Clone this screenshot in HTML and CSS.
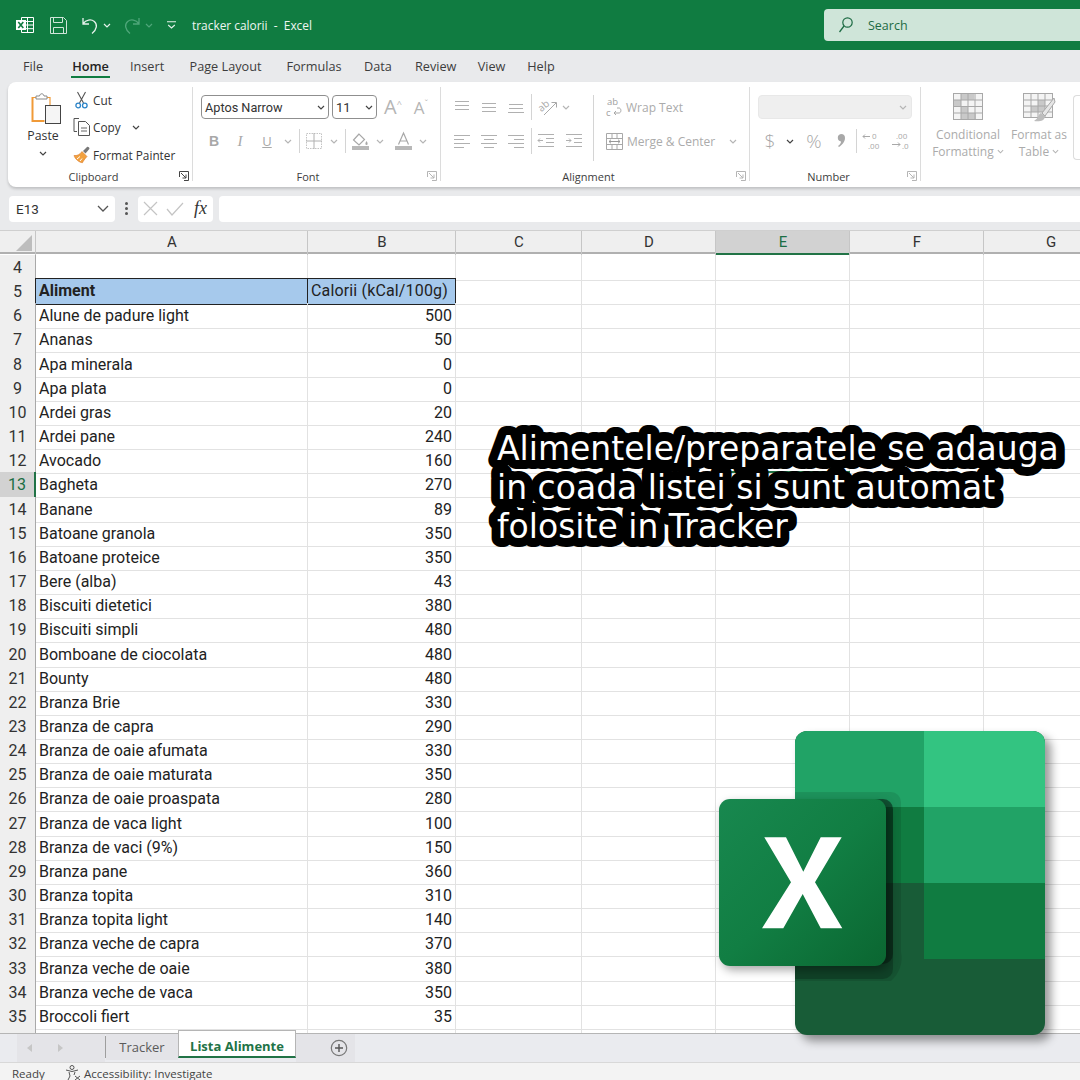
FILE: index.html
```html
<!DOCTYPE html>
<html lang="ro">
<head>
<meta charset="utf-8">
<title>tracker calorii - Excel</title>
<link rel="stylesheet" href="styles.css">
</head>
<body>
<svg class="defs" width="0" height="0" aria-hidden="true">
  <symbol id="chev" viewBox="0 0 8 5"><path d="M1 1l3 3 3-3" fill="none" stroke="currentColor" stroke-width="1.2"/></symbol>
  <symbol id="launch" viewBox="0 0 10 10"><path d="M.5 6V.5H9.5V9.5H5M2 2l5 5M7 3.5V7H3.5" fill="none" stroke="currentColor"/></symbol>
</svg>
<div class="app">
  <header class="titlebar">
    <svg class="t-excel" width="18" height="16" viewBox="0 0 18 16"><path d="M5.5.5h12v15h-12z" fill="none" stroke="#fff"/><path d="M11.5.5v15M5.5 4.5h12M5.5 8h12M5.5 11.7h12" stroke="#fff"/><rect x="0" y="3" width="10" height="10" fill="#fff"/><path d="M2.3 5l5 6M7.3 5l-5 6" stroke="#107c41" stroke-width="1.6"/></svg>
    <svg class="t-save" width="17" height="17" viewBox="0 0 17 17"><path d="M.5.5h13l3 3v13H.5z" fill="none" stroke="#cfe5d9"/><path d="M3.5.5v5h9v-5M3.5 16.5v-6h10v6" fill="none" stroke="#cfe5d9"/></svg>
    <svg class="t-undo" width="16" height="17" viewBox="0 0 16 17"><path d="M1 1v6h6M1.2 6.5C4 2.800 9 1.800 12.300 4.500c3.200 2.800 3 7.500-2.300 12" fill="none" stroke="#e6f2ec" stroke-width="1.3"/></svg>
    <svg class="t-chev" width="8" height="5"><use href="#chev"/></svg>
    <svg class="t-redo" width="16" height="17" viewBox="0 0 16 17"><path d="M15 1v6H9M14.800 6.500C12 2.800 7 1.800 3.700 4.500.5 7.300.7 12 6 16.500" fill="none" stroke="#4fa67a" stroke-width="1.3"/></svg>
    <svg class="t-chev dim" width="8" height="5"><use href="#chev"/></svg>
    <svg class="t-custom" width="9" height="8" viewBox="0 0 9 8"><path d="M0 .7h9M1.200 4l3.300 3L7.800 4" fill="none" stroke="#e6f2ec" stroke-width="1.100"/></svg>
    <span class="t-title">tracker calorii&nbsp; - &nbsp;Excel</span>
    <div class="searchbox">
      <svg width="14" height="16" viewBox="0 0 14 16"><circle cx="8.500" cy="5.500" r="4.700" fill="none" stroke="#1d6b44" stroke-width="1.200"/><path d="M5 9l-4.500 6" stroke="#1d6b44" stroke-width="1.300"/></svg>
      <span>Search</span>
    </div>
  </header>

  <nav class="tabs">
    <span class="tab t1">File</span>
    <span class="tab t2 active">Home</span>
    <span class="tab t3">Insert</span>
    <span class="tab t4">Page Layout</span>
    <span class="tab t5">Formulas</span>
    <span class="tab t6">Data</span>
    <span class="tab t7">Review</span>
    <span class="tab t8">View</span>
    <span class="tab t9">Help</span>
  </nav>

  <section class="ribbon">
    <div class="group g-clip">
      <div class="g-body clip-body">
        <div class="paste">
          <svg class="paste-ic" width="30" height="32" viewBox="0 0 30 32">
            <path d="M1 5.500h4M15 5.500h4V13" fill="none" stroke="#f09a38" stroke-width="1.200"/>
            <path d="M1.500 5v24h12" fill="none" stroke="#f09a38" stroke-width="2"/>
            <path d="M5 7V4h3.500c.5-3 4-3 4.500 0h3v3z" fill="#fff" stroke="#8a8a8a"/>
            <rect x="14.500" y="13.500" width="15" height="18" fill="#f5f5f5" stroke="#444"/>
          </svg>
          <span class="paste-l">Paste</span>
          <svg class="ic-chev dark" width="8" height="5"><use href="#chev"/></svg>
        </div>
        <div class="clip-list">
          <div class="clip-item">
            <svg width="16" height="18" viewBox="0 0 16 18"><path d="M3.500 1l6 11M11.500 1l-6 11" stroke="#555" stroke-width="1.100" fill="none"/><circle cx="4.200" cy="14.500" r="2.300" fill="none" stroke="#2f86c9" stroke-width="1.300"/><circle cx="10.800" cy="14.500" r="2.300" fill="none" stroke="#2f86c9" stroke-width="1.300"/></svg>
            <span>Cut</span>
          </div>
          <div class="clip-item">
            <svg width="18" height="18" viewBox="0 0 18 18"><path d="M6 .5H1v13h3" fill="none" stroke="#555"/><path d="M5.500 3.500h7l4 4v10h-11z" fill="#fff" stroke="#555"/><path d="M8 10h6M8 13h6" stroke="#666"/></svg>
            <span>Copy</span>
            <svg class="copy-chev dark" width="8" height="5"><use href="#chev"/></svg>
          </div>
          <div class="clip-item">
            <svg width="18" height="17" viewBox="0 0 18 17"><path d="M1 9.500c3 .5 6-1 8-4l5 5c-2 2-4 5-4.500 6.200C6 16.500 2 13 1 9.500z" fill="#f2a13f" stroke="#d9792a" stroke-width=".6"/><path d="M4 13l3-2.500M7 15l2-2.500" stroke="#fff"/><path d="M10 5l4-4c1-.8 3 1 2.300 2l-3.800 4.500z" fill="#777"/></svg>
            <span>Format Painter</span>
          </div>
        </div>
      </div>
      <div class="glabel"><span></span><span>Clipboard</span><span></span><svg class="launch dark" width="10" height="10"><use href="#launch"/></svg></div>
    </div>

    <div class="group g-font">
      <div class="g-body">
        <div class="font-row1">
          <div class="select s-font"><span>Aptos Narrow</span><svg class="dark" width="8" height="5"><use href="#chev"/></svg></div>
          <div class="select s-size"><span>11</span><svg class="dark" width="8" height="5"><use href="#chev"/></svg></div>
          <span class="grow big">A<sup>^</sup></span>
          <span class="grow small">A<sup>ˇ</sup></span>
        </div>
        <div class="font-row2">
          <b class="fmt">B</b>
          <i class="fmt ital">I</i>
          <u class="fmt und">U</u>
          <svg class="off" width="8" height="5"><use href="#chev"/></svg>
          <span class="vsep"></span>
          <svg width="16" height="16" viewBox="0 0 16 16"><path d="M.5.500h15v15H.5z" fill="none" stroke="#c4c4c4" stroke-dasharray="1.500 1"/><path d="M8 0v16M0 8h16" stroke="#b0b0b0"/></svg>
          <svg class="off" width="8" height="5"><use href="#chev"/></svg>
          <span class="vsep"></span>
          <svg width="17" height="17" viewBox="0 0 17 17"><path d="M7 1L1.500 7 7 12l5.500-5.500z" fill="none" stroke="#a8a8a8" stroke-width="1.200"/><path d="M14.500 8c1.500 2 1.500 4 0 4s-1.500-2 0-4z" fill="#a8a8a8"/><rect y="13" width="17" height="4" fill="#b8b8b8"/></svg>
          <svg class="off" width="8" height="5"><use href="#chev"/></svg>
          <svg width="17" height="17" viewBox="0 0 17 17"><path d="M3.500 11.500L8.500 0l5 11.500M5 8h7" fill="none" stroke="#a8a8a8" stroke-width="1.200"/><rect y="13" width="17" height="4" fill="#b8b8b8"/></svg>
          <svg class="off" width="8" height="5"><use href="#chev"/></svg>
        </div>
      </div>
      <div class="glabel"><span></span><span>Font</span><span></span><svg class="launch off" width="10" height="10"><use href="#launch"/></svg></div>
    </div>

    <div class="group g-align">
      <div class="g-body align-body">
        <div class="align-grid">
          <svg width="18" height="12" viewBox="0 0 18 12"><path d="M2 .5h14M2 4.500h14M2 8.500h14" stroke="#b0b0b0"/></svg>
          <svg width="18" height="12" viewBox="0 0 18 12"><path d="M2 2.500h14M2 6.500h14M2 10.500h14" stroke="#b0b0b0"/></svg>
          <svg width="18" height="12" viewBox="0 0 18 12"><path d="M2 3.500h14M2 7.500h14M1 11.500h16" stroke="#b0b0b0"/></svg>
          <span class="vsep tall"></span>
          <div class="orient">
            <svg width="20" height="18" viewBox="0 0 20 18"><text class="orient-t" x="0" y="11" transform="rotate(-40 6 8)">ab</text><path d="M6 17L18 5M13.500 4.500H18.500V9.500" fill="none" stroke="#a8a8a8"/></svg>
            <svg class="off" width="8" height="5"><use href="#chev"/></svg>
          </div>
          <svg width="18" height="14" viewBox="0 0 18 14"><path d="M1 1.500h16M1 5.500h10M1 9.500h16M1 13.500h10" stroke="#b0b0b0"/></svg>
          <svg width="18" height="14" viewBox="0 0 18 14"><path d="M1 1.500h16M4 5.500h10M1 9.500h16M4 13.500h10" stroke="#b0b0b0"/></svg>
          <svg width="18" height="14" viewBox="0 0 18 14"><path d="M1 1.500h16M7 5.500h10M1 9.500h16M7 13.500h10" stroke="#b0b0b0"/></svg>
          <span class="vsep tall"></span>
          <svg width="18" height="14" viewBox="0 0 18 14"><path d="M1 .5h16M9 4.500h8M9 8.500h8M1 12.500h16M6 6.500H1M3 4.500l-2 2 2 2" fill="none" stroke="#b0b0b0"/></svg>
          <svg width="18" height="14" viewBox="0 0 18 14"><path d="M1 .5h16M9 4.500h8M9 8.500h8M1 12.500h16M1 6.500h5M4 4.500l2 2-2 2" fill="none" stroke="#b0b0b0"/></svg>
        </div>
        <span class="vsep full"></span>
        <div class="wrap-col">
          <div class="wrap-item"><svg width="16" height="20" viewBox="0 0 16 20"><text class="wrap-t" x="1" y="8">ab</text><text class="wrap-t" x="0" y="19">c</text><path d="M8 16h5c2.500 0 2.500-5 0-5h-2M10 14l-2 2 2 2" fill="none" stroke="#a8a8a8"/></svg><span>Wrap Text</span></div>
          <div class="wrap-item"><svg width="17" height="17" viewBox="0 0 17 17"><path d="M.5.500h16v16H.5zM.5 5.500h16M.5 11.500h16M6 .5v5M11 .5v5M6 11.500v5M11 11.500v5" fill="none" stroke="#a8a8a8"/><path d="M3 8.500h11M5 6.700L3 8.500l2 1.800M12 6.700l2 1.800-2 1.800" fill="none" stroke="#999"/></svg><span>Merge &amp; Center</span><svg class="off merge-chev" width="8" height="5"><use href="#chev"/></svg></div>
        </div>
      </div>
      <div class="glabel"><span></span><span>Alignment</span><span></span><svg class="launch off" width="10" height="10"><use href="#launch"/></svg></div>
    </div>

    <div class="group g-num">
      <div class="g-body">
        <div class="select s-num"><svg class="off" width="8" height="5"><use href="#chev"/></svg></div>
        <div class="num-row">
          <span class="num-s">$</span>
          <svg class="dark" width="8" height="5"><use href="#chev"/></svg>
          <span class="num-s pct">%</span>
          <svg width="10" height="14" viewBox="0 0 10 14"><path d="M5 0a4 4 0 0 1 4 4c0 4-3 7-6 9l-1-1c2-1.500 3-3 3-4.500A3.800 3.800 0 0 1 5 0z" fill="#a8a8a8"/></svg>
          <span class="vsep"></span>
          <svg width="20" height="18" viewBox="0 0 20 18"><text class="dec-t" x="10" y="7">0</text><text class="dec-t" x="6" y="17">.00</text><path d="M8 4.500H1M3 2.500L1 4.500l2 2" fill="none" stroke="#a8a8a8"/></svg>
          <svg width="20" height="18" viewBox="0 0 20 18"><text class="dec-t" x="6" y="7">.00</text><text class="dec-t" x="12" y="17">.0</text><path d="M2 12.500h8M8 10.500l2 2-2 2" fill="none" stroke="#a8a8a8"/></svg>
        </div>
      </div>
      <div class="glabel"><span></span><span>Number</span><span></span><svg class="launch off" width="10" height="10"><use href="#launch"/></svg></div>
    </div>

    <div class="group g-styles">
      <div class="style-item s-cf">
        <svg width="30" height="28" viewBox="0 0 30 28"><rect x=".5" y=".5" width="29" height="26" fill="#f4f4f4" stroke="#a8a8a8"/><path d="M8 1h13v6H8zM1 7h7v6H1zM15 13H8v7h7zM8 20h15v6H8z" fill="#c9c9c9"/><path d="M0 7h30M0 13.500h30M0 20h30M8 0v27M15 0v27M22 0v27" stroke="#a8a8a8" fill="none"/></svg>
        <span>Conditional<br>Formatting <svg class="off" width="7" height="5"><use href="#chev"/></svg></span>
      </div>
      <div class="style-item s-ft">
        <svg width="32" height="30" viewBox="0 0 32 30"><rect x=".5" y=".5" width="29" height="24" fill="#f4f4f4" stroke="#a8a8a8"/><path d="M15 7h7v6h-7zM8 13h14v6H8z" fill="#c9c9c9"/><path d="M0 7h30M0 13h30M0 19h30M8 0v25M15 0v25M22 0v25" stroke="#a8a8a8"/><path d="M31 5L19 20l3 3L32 9z" fill="#e6e6e6" stroke="#a8a8a8"/><path d="M18 20c-3 1-2 5-7 8 5 1 11 0 11-5z" fill="#bdbdbd"/></svg>
        <span>Format as<br>Table <svg class="off" width="7" height="5"><use href="#chev"/></svg></span>
      </div>
      <div class="next-box"></div>
    </div>
  </section>

  <section class="fbar">
    <div class="namebox"><span>E13</span><svg class="nb-chev" width="12" height="7" viewBox="0 0 12 7"><path d="M1 1l5 5 5-5" fill="none" stroke="#555" stroke-width="1.300"/></svg></div>
    <div class="fdots"><i></i><i></i><i></i></div>
    <div class="fbtns">
      <svg width="15" height="15" viewBox="0 0 15 15"><path d="M1 1l13 13M14 1L1 14" stroke="#c4c4c4" stroke-width="1.200"/></svg>
      <svg width="18" height="14" viewBox="0 0 18 14"><path d="M1 7l5 6L17 1" fill="none" stroke="#c4c4c4" stroke-width="1.200"/></svg>
      <span class="fx">fx</span>
    </div>
    <div class="finput"></div>
  </section>

  <main class="sheet">
    <div class="colhead">
      <div class="corner"><svg width="16" height="16" viewBox="0 0 16 16"><path d="M16 0v16H0z" fill="#bdbdbd"/></svg></div>
      <div class="ch">A</div><div class="ch">B</div><div class="ch">C</div><div class="ch">D</div><div class="ch sel">E</div><div class="ch">F</div><div class="ch">G</div>
    </div>
    <div class="rows">
      <div class="row"><div class="rh">4</div><div class="ca"></div><div class="cb"></div><div class="rest"></div></div>
      <div class="row"><div class="rh">5</div><div class="ca hd"><b>Aliment</b></div><div class="cb hd">Calorii (kCal/100g)</div><div class="rest"></div></div>
      <div class="row"><div class="rh">6</div><div class="ca">Alune de padure light</div><div class="cb">500</div><div class="rest"></div></div>
      <div class="row"><div class="rh">7</div><div class="ca">Ananas</div><div class="cb">50</div><div class="rest"></div></div>
      <div class="row"><div class="rh">8</div><div class="ca">Apa minerala</div><div class="cb">0</div><div class="rest"></div></div>
      <div class="row"><div class="rh">9</div><div class="ca">Apa plata</div><div class="cb">0</div><div class="rest"></div></div>
      <div class="row"><div class="rh">10</div><div class="ca">Ardei gras</div><div class="cb">20</div><div class="rest"></div></div>
      <div class="row"><div class="rh">11</div><div class="ca">Ardei pane</div><div class="cb">240</div><div class="rest"></div></div>
      <div class="row"><div class="rh">12</div><div class="ca">Avocado</div><div class="cb">160</div><div class="rest"></div></div>
      <div class="row"><div class="rh sel">13</div><div class="ca">Bagheta</div><div class="cb">270</div><div class="rest"><div class="active-cell"></div></div></div>
      <div class="row"><div class="rh">14</div><div class="ca">Banane</div><div class="cb">89</div><div class="rest"></div></div>
      <div class="row"><div class="rh">15</div><div class="ca">Batoane granola</div><div class="cb">350</div><div class="rest"></div></div>
      <div class="row"><div class="rh">16</div><div class="ca">Batoane proteice</div><div class="cb">350</div><div class="rest"></div></div>
      <div class="row"><div class="rh">17</div><div class="ca">Bere (alba)</div><div class="cb">43</div><div class="rest"></div></div>
      <div class="row"><div class="rh">18</div><div class="ca">Biscuiti dietetici</div><div class="cb">380</div><div class="rest"></div></div>
      <div class="row"><div class="rh">19</div><div class="ca">Biscuiti simpli</div><div class="cb">480</div><div class="rest"></div></div>
      <div class="row"><div class="rh">20</div><div class="ca">Bomboane de ciocolata</div><div class="cb">480</div><div class="rest"></div></div>
      <div class="row"><div class="rh">21</div><div class="ca">Bounty</div><div class="cb">480</div><div class="rest"></div></div>
      <div class="row"><div class="rh">22</div><div class="ca">Branza Brie</div><div class="cb">330</div><div class="rest"></div></div>
      <div class="row"><div class="rh">23</div><div class="ca">Branza de capra</div><div class="cb">290</div><div class="rest"></div></div>
      <div class="row"><div class="rh">24</div><div class="ca">Branza de oaie afumata</div><div class="cb">330</div><div class="rest"></div></div>
      <div class="row"><div class="rh">25</div><div class="ca">Branza de oaie maturata</div><div class="cb">350</div><div class="rest"></div></div>
      <div class="row"><div class="rh">26</div><div class="ca">Branza de oaie proaspata</div><div class="cb">280</div><div class="rest"></div></div>
      <div class="row"><div class="rh">27</div><div class="ca">Branza de vaca light</div><div class="cb">100</div><div class="rest"></div></div>
      <div class="row"><div class="rh">28</div><div class="ca">Branza de vaci (9%)</div><div class="cb">150</div><div class="rest"></div></div>
      <div class="row"><div class="rh">29</div><div class="ca">Branza pane</div><div class="cb">360</div><div class="rest"></div></div>
      <div class="row"><div class="rh">30</div><div class="ca">Branza topita</div><div class="cb">310</div><div class="rest"></div></div>
      <div class="row"><div class="rh">31</div><div class="ca">Branza topita light</div><div class="cb">140</div><div class="rest"></div></div>
      <div class="row"><div class="rh">32</div><div class="ca">Branza veche de capra</div><div class="cb">370</div><div class="rest"></div></div>
      <div class="row"><div class="rh">33</div><div class="ca">Branza veche de oaie</div><div class="cb">380</div><div class="rest"></div></div>
      <div class="row"><div class="rh">34</div><div class="ca">Branza veche de vaca</div><div class="cb">350</div><div class="rest"></div></div>
      <div class="row"><div class="rh">35</div><div class="ca">Broccoli fiert</div><div class="cb">35</div><div class="rest"></div></div>
      <div class="row"><div class="rh"></div><div class="ca"></div><div class="cb"></div><div class="rest"></div></div>
    </div>
  </main>

  <div class="sheettabs">
    <div class="st-nav">
      <svg width="6" height="8" viewBox="0 0 6 8"><path d="M5 0v8L0 4z" fill="#c6c6c6"/></svg>
      <svg width="6" height="8" viewBox="0 0 6 8"><path d="M1 0v8l5-4z" fill="#c6c6c6"/></svg>
    </div>
    <span class="st-sep"></span>
    <span class="st-tab">Tracker</span>
    <span class="st-tab current">Lista Alimente</span>
    <div class="st-add"><svg width="18" height="18" viewBox="0 0 18 18"><circle cx="9" cy="9" r="7.700" fill="none" stroke="#777" stroke-width="1.200"/><path d="M9 5v8M5 9h8" stroke="#555" stroke-width="1.400"/></svg></div>
  </div>

  <footer class="status">
    <span class="ready">Ready</span>
    <svg width="16" height="16" viewBox="0 0 16 16"><circle cx="7" cy="2.500" r="2" fill="none" stroke="#555"/><path d="M1 5l6 1.500L13 5M4 7l1 4-2 4M10 7l-1 3M10 11l5 4M15 11l-5 4" fill="none" stroke="#555"/></svg>
    <span>Accessibility: Investigate</span>
  </footer>
</div>

<svg class="note" width="600" height="140" viewBox="0 0 600 140">
  <text x="17" y="118">folosite in Tracker</text>
  <text x="17" y="79">in coada listei si sunt automat</text>
  <text x="17" y="40">Alimentele/preparatele se adauga</text>
</svg>

<svg class="logo" width="370" height="330" viewBox="0 0 370 330">
  <g class="logo-main">
    <rect x="95" y="11" width="250" height="304" rx="12" fill="#185c37"/>
    <path d="M107 11h117v76H95V23a12 12 0 0 1 12-12z" fill="#21a366"/>
    <path d="M224 11h109a12 12 0 0 1 12 12v64H224z" fill="#33c481"/>
    <rect x="95" y="87" width="129" height="76" fill="#107c41"/>
    <rect x="224" y="87" width="121" height="76" fill="#21a366"/>
    <rect x="224" y="163" width="121" height="76" fill="#107c41"/>
  </g>
  <path d="M95 72h96a10 10 0 0 1 10 10v150a30 30 0 0 1-10 29H95z" fill="#000" opacity=".1"/>
  <path d="M95 79h88a10 10 0 0 1 10 10v160a10 10 0 0 1-10 10H95z" fill="#000" opacity=".2"/>
  <path d="M95 79h88a10 10 0 0 1 10 10v145a10 10 0 0 1-10 10H95z" fill="#000" opacity=".3"/>
  <rect class="logo-sq" x="19" y="79" width="167" height="167" rx="11" fill="url(#lg)"/>
  <defs><linearGradient id="lg" x1="0" y1="0" x2="1" y2="1"><stop offset="0" stop-color="#18884f"/><stop offset=".5" stop-color="#117e43"/><stop offset="1" stop-color="#0b6631"/></linearGradient></defs>
  <path d="M64.300 117.300H86L103.300 151.700 120.700 117.300H141.700L115 162.300 142.300 208.300H120.700L102.700 174 83.300 208.300H62L91 162.300z" fill="#fff"/>
</svg>
</body>
</html>
```
FILE: styles.css
```css
* { box-sizing: border-box; }
html, body { margin: 0; padding: 0; width: 1080px; height: 1080px; overflow: hidden; background: #fff; }
body { position: relative; font-family: "Open Sans", "Noto Sans", sans-serif; color: #333; }
.defs { position: absolute; }
svg { display: block; flex: none; overflow: visible; }
.off { color: #b5b5b5; }
.dark { color: #444; }

.app { display: flex; flex-direction: column; width: 1080px; height: 1080px; background: #e9eaec; overflow: hidden; }

/* title bar */
.titlebar { height: 50px; flex: none; background: #107c41; display: flex; align-items: center; padding-left: 16px; color: #e6f2ec; }
.t-excel { margin-right: 16px; }
.t-save { margin-right: 15px; }
.t-chev { margin: 0 0 0 5px; color: #e6f2ec; }
.t-redo { margin-left: 13px; }
.t-chev.dim { color: #4fa67a; }
.t-custom { margin-left: 14px; }
.t-title { flex: none; margin-left: 16px; font-size: 11.900px; color: #eef6f1; white-space: nowrap; width: 632px; }
.searchbox { width: 300px; height: 32px; flex: none; background: #cfe5d9; border-radius: 4px; display: flex; align-items: center; padding-left: 15px; gap: 15px; color: #1d6b44; font-size: 12.500px; }

/* tabs */
.tabs { height: 32px; flex: none; display: flex; align-items: center; font-size: 12.700px; color: #3d3d3d; }
.tab { flex: none; text-align: center; white-space: nowrap; }
.t1 { margin-left: 23px; width: 20px; }
.t2 { margin-left: 28px; width: 39px; }
.t3 { margin-left: 20px; width: 34px; }
.t4 { margin-left: 24px; width: 75px; }
.t5 { margin-left: 23px; width: 56px; }
.t6 { margin-left: 22px; width: 28px; }
.t7 { margin-left: 23px; width: 41px; }
.t8 { margin-left: 21px; width: 29px; }
.t9 { margin-left: 21px; width: 28px; }
.tab.active { font-weight: 600; color: #222; height: 100%; line-height: 32px; box-shadow: inset 0 -4px 0 #e9eaec, inset 0 -6px 0 #107c41; }

/* ribbon */
.ribbon { height: 105px; flex: none; margin-left: 8px; width: 1100px; background: #fff; border-radius: 8px; display: flex; box-shadow: 0 2px 3px rgba(0,0,0,.18); font-size: 11.500px; overflow: hidden; }
.group { flex: none; display: flex; flex-direction: column; position: relative; padding-top: 13px; }
.group::after { content: ""; position: absolute; right: 0; top: 5px; bottom: 6px; width: 1px; background: #dcdcdc; }
.g-clip { width: 185px; padding-top: 4px; }
.g-font { width: 248px; padding-left: 8px; }
.g-align { width: 309px; padding-left: 7px; padding-top: 8px; }
.g-num { width: 171px; padding-left: 8px; }
.g-styles { width: 180px; padding-top: 0; flex-direction: row; }
.g-styles::after { display: none; }
.g-body { flex: 1; min-height: 0; }
.glabel { height: 22px; flex: none; display: grid; grid-template-columns: 1fr auto 1fr 14px; align-items: center; color: #3d3d3d; font-size: 11px; }
.g-font .glabel { margin-left: -12px; }
.g-align .glabel { margin-left: -7px; }
.g-num .glabel { margin-left: -8px; }
.launch { justify-self: start; }

.clip-body { display: flex; }
.paste { width: 40px; margin-left: 15px; display: flex; flex-direction: column; align-items: center; padding-top: 6px; }
.paste-ic { margin-left: 5px; }
.paste-l { margin-top: 4px; font-size: 12.300px; line-height: 16px; }
.ic-chev { margin-top: 7px; }
.clip-list { margin-left: 9px; display: flex; flex-direction: column; }
.clip-item { height: 27.500px; flex: none; display: flex; align-items: center; white-space: nowrap; }
.clip-item > svg:first-child { width: 20px; margin-right: 1px; }
.clip-item > span { font-size: 11.800px; }
.copy-chev { margin-left: 11px; }

.select { border: 1px solid #8f8f8f; border-radius: 4px; height: 24px; display: flex; align-items: center; justify-content: space-between; padding: 0 3px; background: #fff; font-size: 12px; color: #333; }
.s-font { width: 128px; font-family: "Roboto", sans-serif; font-size: 12.700px; }
.s-size { width: 45px; margin-left: 3px; font-family: "Roboto", sans-serif; font-size: 13px; }
.font-row1 { display: flex; align-items: center; height: 24px; }
.grow { color: #b5b5b5; font-size: 20px; line-height: 1; width: 28px; text-align: center; }
.grow sup { font-size: 9px; vertical-align: 7px; line-height: 0; }
.grow.big { margin-left: 2px; }
.grow.small { font-size: 17px; }
.font-row2 { display: grid; grid-template-columns: 26px 26px 28px 14px 8px 22px 18px 4px 26px 14px 32px 8px; justify-items: center; align-items: center; height: 24px; margin-top: 10px; color: #aaa; font-family: "Liberation Sans", sans-serif; font-size: 14px; }
.fmt { color: #a8a8a8; }
.ital { font-family: "Liberation Serif", serif; font-size: 15px; }
.und { font-weight: 400; font-family: "Open Sans", sans-serif; font-size: 13px; }
.vsep { display: block; width: 1px; height: 24px; background: #d4d4d4; }
.vsep.tall { height: 26px; }
.vsep.full { height: 66px; margin: 5px 0 0 5px; }

.align-body { display: flex; }
.align-grid { width: 140px; flex: none; display: grid; grid-template-columns: 27px 27px 28px 2px 28px 28px; grid-auto-rows: 34px; justify-items: center; align-items: center; }
.orient { grid-column: 5 / span 2; justify-self: start; display: flex; align-items: center; gap: 4px; margin-left: 6px; }
.orient-t { font-size: 10px; fill: #a8a8a8; }
.wrap-col { margin-left: 12px; display: flex; flex-direction: column; color: #ababab; font-size: 12px; }
.wrap-item { height: 34px; display: flex; align-items: center; gap: 4px; white-space: nowrap; }
.wrap-t { font-size: 9.500px; fill: #a0a0a0; }
.merge-chev { margin-left: 10px; }

.s-num { width: 154px; background: #efefef; border: 1px solid #e8e8e8; justify-content: flex-end; padding-right: 4px; }
.num-row { display: grid; grid-template-columns: 24px 16px 32px 22px 8px 24px 32px; justify-items: center; align-items: center; height: 24px; margin-top: 10px; color: #a8a8a8; }
.num-s { font-size: 19px; line-height: 24px; font-weight: 300; }
.pct { font-size: 19px; }
.dec-t { font-size: 8px; fill: #a8a8a8; font-family: "Open Sans", sans-serif; }

.style-item { flex: none; display: flex; flex-direction: column; align-items: center; text-align: center; color: #ababab; font-size: 12px; line-height: 17px; white-space: nowrap; }
.style-item span svg { display: inline-block; vertical-align: 2px; }
.s-cf { width: 80px; margin-left: 7px; padding-top: 11px; }
.s-cf > span { margin-top: 5px; }
.s-ft { width: 62px; padding-top: 11px; }
.s-ft > span { margin-top: 3px; }
.next-box { width: 40px; height: 65px; margin-top: 13px; margin-left: 3px; border: 1px solid #dcdcdc; border-right: 0; border-radius: 4px 0 0 4px; }

/* formula bar */
.fbar { height: 44px; flex: none; display: flex; align-items: center; padding: 9px 0 9px 9px; border-bottom: 1px solid #cfcfcf; }
.namebox { width: 106px; height: 26px; background: #fff; border-radius: 4px; display: flex; align-items: center; justify-content: space-between; padding: 0 6px 0 7px; font-family: "Roboto", sans-serif; font-size: 13.500px; color: #333; }
.fdots { width: 23px; display: flex; flex-direction: column; align-items: center; gap: 2px; }
.fdots i { width: 3px; height: 3px; border-radius: 50%; background: #555; display: block; }
.fbtns { width: 75px; height: 26px; background: #fff; border-radius: 4px; display: flex; align-items: center; padding-left: 5px; gap: 8px; }
.fx { font-family: "Liberation Serif", serif; font-style: italic; font-size: 18px; color: #333; margin-left: 2px; }
.finput { flex: 1; height: 26px; background: #fff; border-radius: 4px 0 0 4px; margin-left: 6px; }

/* sheet */
.sheet { height: 802px; flex: none; background: #fff; overflow: hidden; font-family: "Roboto", sans-serif; font-size: 16px; color: #222; }
.colhead { height: 23px; display: grid; grid-template-columns: 35px 272px 148px 126px 134px 134px 134px 134px; background: #efefef; box-shadow: inset 0 -2px 0 #b0b0b0; }
.corner { display: flex; align-items: center; justify-content: flex-end; padding-right: 3px; }
.ch { text-align: center; line-height: 22px; border-left: 1px solid #c6c6c6; font-size: 15px; color: #333; padding: 0 0 2px 1px; }
.ch.sel { background: #d2d2d2; color: #1b6e44; box-shadow: inset 0 -2px 0 #217346; }
.rows { display: flex; flex-direction: column; margin-top: 1px; }
.row { height: 24.170px; flex: none; display: grid; grid-template-columns: 36px 272px 148px 1fr; }
.rh { background: #efefef; border-right: 1px solid #a9a9a9; border-bottom: 1px solid #d4d4d4; text-align: center; line-height: 25px; font-size: 16px; color: #333; }
.rh.sel { background: #d2d2d2; color: #1b6e44; border-right: 2px solid #217346; }
.ca, .cb { border-right: 1px solid #e2e2e2; border-bottom: 1px solid #e2e2e2; padding: 0 3px; line-height: 26px; white-space: nowrap; overflow: hidden; }
.cb { text-align: right; }
.hd { background: #a6c9ec; border-right: 1px solid #222; border-bottom: 1px solid #222; line-height: 24px; box-shadow: 0 -1px 0 #222; }
.ca.hd { border-left: 1px solid #222; margin-left: -1px; padding-left: 3px; }
.cb.hd { text-align: left; letter-spacing: .15px; }
.rest { position: relative; border-bottom: 1px solid #e2e2e2; background-image: linear-gradient(#e2e2e2, #e2e2e2), linear-gradient(#e2e2e2, #e2e2e2), linear-gradient(#e2e2e2, #e2e2e2), linear-gradient(#e2e2e2, #e2e2e2); background-size: 1px 100%; background-repeat: no-repeat; background-position: 125px 0, 259px 0, 393px 0, 527px 0; }
.active-cell { position: absolute; left: 259px; top: -1px; width: 135px; height: 25px; border: 2px solid #217346; }

/* sheet tabs */
.sheettabs { height: 29px; flex: none; display: flex; align-items: flex-start; background: #eaebef; border-top: 1px solid #b5b5b5; font-family: "Open Sans", sans-serif; font-size: 13px; padding-left: 17px; }
.st-nav { width: 88px; height: 28px; background: #e4e4e8; display: flex; align-items: center; gap: 24px; padding-left: 10px; flex: none; }
.st-sep { width: 1px; height: 22px; margin-top: 2px; background: #9e9e9e; flex: none; }
.st-tab { height: 26px; line-height: 27px; flex: none; text-align: center; color: #5a5a5a; width: 72px; background: #e4e4e8; }
.st-tab.current { width: 118px; height: 28px; margin-top: -4px; line-height: 31px; background: #fff; color: #217346; font-weight: 700; border-left: 1px solid #b5b5b5; border-right: 1px solid #b5b5b5; border-top: 1px solid #b5b5b5; border-bottom: 2px solid #217346; }
.st-add { width: 59px; height: 28px; background: #e4e4e8; display: flex; align-items: center; justify-content: flex-end; padding-right: 7px; flex: none; }

/* status bar */
.status { flex: 1; background: #f3f3f3; border-top: 1px solid #d8d8d8; display: flex; align-items: flex-start; font-family: "Open Sans", sans-serif; font-size: 11.500px; color: #444; padding-left: 12px; line-height: 20px; padding-top: 1px; white-space: nowrap; }
.ready { width: 53px; }
.status svg { margin: 1px 3px 0 0; }

/* overlays */
.note { position: absolute; left: 480px; top: 420px; font-family: "DejaVu Sans", sans-serif; font-size: 33px; }
.note text { fill: #fff; stroke: #000; stroke-width: 18px; stroke-linejoin: round; stroke-linecap: round; paint-order: stroke; }
.logo { position: absolute; left: 700px; top: 720px; }
.logo-main { filter: drop-shadow(6px 6px 5px rgba(0,0,0,.4)); }
.logo-sq { filter: drop-shadow(3px 4px 5px rgba(0,0,0,.35)); }
```
